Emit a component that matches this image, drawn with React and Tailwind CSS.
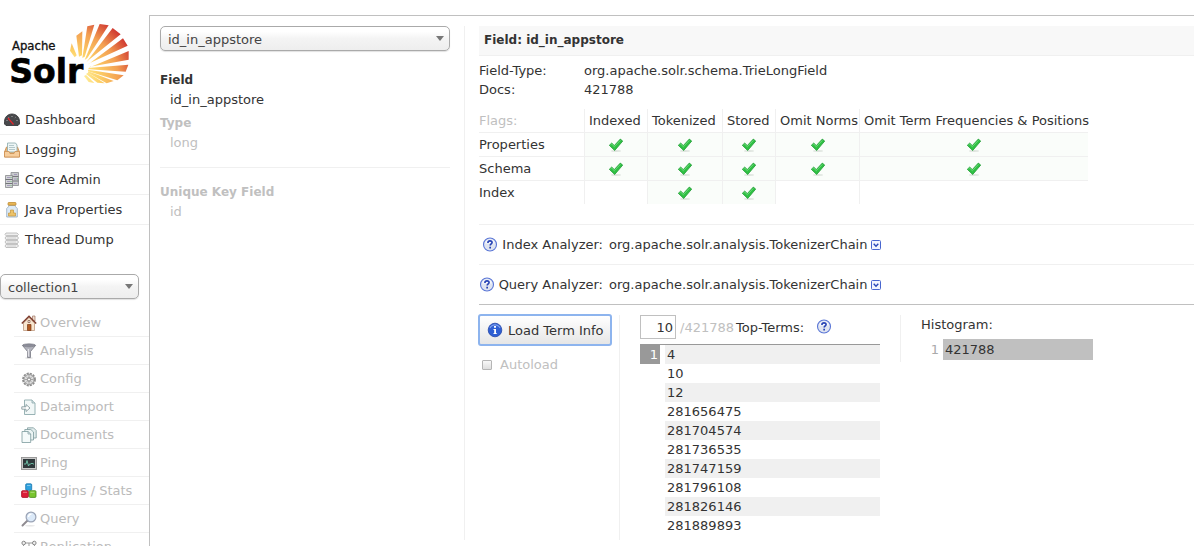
import React from "react";

const rays = [
  "210,152 215,130 230,166 224,172",
  "229,107 247,94 246,166 237,170",
  "262,79 283,74 254,170 247,174",
  "299,72 326,76 262,174 254,180",
  "338,84 362,103 266,180 259,187",
  "369,115 383,137 268,190 262,195",
  "386,153 386,179 270,200 266,203",
  "385,194 377,215 268,208 264,204",
  "371,226 352,241 264,214 264,209",
  "341,243 320,250 264,219 265,214",
  "314,250 292,248 258,222 264,218",
  "283,249 266,246 252,228 258,225",
];

function Logo() {
  return (
    <svg viewBox="0 0 447 315" className="h-[105px] w-[149px]" role="img" aria-label="Apache Solr">
      <defs>
        <radialGradient id="sun" gradientUnits="userSpaceOnUse" cx="205" cy="245" r="218">
          <stop offset="0.2" stopColor="#fff0a0" />
          <stop offset="0.42" stopColor="#fdd268" />
          <stop offset="0.7" stopColor="#f3a052" />
          <stop offset="1" stopColor="#cb2a2c" />
        </radialGradient>
      </defs>
      {rays.map((p) => (
        <polygon key={p} points={p} fill="url(#sun)" />
      ))}
      <text x="36" y="150" fontSize="35" stroke="#111" strokeWidth="1" fill="#111" className="font-['DejaVu_Sans',sans-serif]">Apache</text>
      <text x="28" y="248" fontSize="99" fontWeight="700" fill="#000" stroke="#000" strokeWidth="2" className="font-['DejaVu_Sans',sans-serif]">Solr</text>
    </svg>
  );
}

function Icon({ children }) {
  return (
    <svg viewBox="0 0 16 16" className="size-4 shrink-0" aria-hidden="true">
      {children}
    </svg>
  );
}

const icons = {
  dashboard: (
    <>
      <path d="M.5 12V9.500C.5 5 4 2 8 2s7.500 3 7.500 7.500V12l-1.500 1.500H2z" fill="#48494c" stroke="#2c2d30" strokeWidth=".8" />
      <path d="M2.500 8.500h1M4.500 5.300l.6.600M8 4v1M11.500 5.300l-.6.600M12.500 8.500h1" stroke="#bbb" strokeWidth=".9" />
      <path d="M4 6l5.500 6.500" stroke="#e5262c" strokeWidth="1.200" />
    </>
  ),
  logging: (
    <>
      <path d="M2.500 5L.5 10v5h15v-5l-2-5z" fill="#e7b276" stroke="#c98a4b" strokeWidth=".8" />
      <path d="M3.500 1h8l1.500 2v7h-9.500z" fill="#eef6f6" stroke="#8aa9ac" strokeWidth=".8" />
      <path d="M5 3.500h5M5 5.500h6M5 7.500h6" stroke="#a5bcc0" strokeWidth=".8" />
      <path d="M.5 9.500H5l1 2h4l1-2h4.500V15H.5z" fill="#f6cd9c" stroke="#cd9053" strokeWidth=".8" />
    </>
  ),
  core: (
    <>
      <path d="M7 .5h7.500v13H7z" fill="#c7c9cc" stroke="#8b8d90" strokeWidth=".8" />
      <path d="M7 4.500h7.500M7 9h7.500" stroke="#77797c" />
      <path d="M1.500 3.500h7v12h-7z" fill="#d2d4d6" stroke="#86888b" strokeWidth=".8" />
      <path d="M1.500 7.500h7M1.500 11.500h7" stroke="#727477" />
      <path d="M3 5.500h3M3 9.500h3M3 13.500h3M10 2.500h3M10 7h3M10 11.500h3" stroke="#9a8fb5" strokeWidth=".8" />
      <path d="M6.500 5.500h1M6.500 9.500h1M6.500 13.500h1M13 7h1" stroke="#65ad68" />
    </>
  ),
  java: (
    <>
      <path d="M4.500 3.500h7v1.200l1.800 1.800v8.500H2.700V6.500l1.800-1.800z" fill="#dceaf6" stroke="#91aac2" strokeWidth=".8" />
      <rect x="4" y=".5" width="8" height="2.700" rx=".8" fill="#e7b657" stroke="#b98427" strokeWidth=".7" />
      <path d="M6.500 8h3v3h2v3h-7v-3h2z" fill="#ecc36a" stroke="#c6953c" strokeWidth=".7" />
    </>
  ),
  thread: (
    <>
      <path d="M2 1h11l1.500 1.500L13 4l1.500 2L13 8l1.500 2L13 12l1.500 2-1.500 1.500H2L1 14l1.500-2L1 10l1.500-2L1 6l1.500-2L1 2.500z" fill="#eee" stroke="#b3b3b3" strokeWidth=".8" />
      <path d="M2.500 4H13M2.500 8H13M2.500 12H13" stroke="#999" />
      <path d="M3 6h9M3 10h9M3 14h9" stroke="#d2d2d2" />
    </>
  ),
  overview: (
    <>
      <path d="M11.500 1h2.500v5h-2.500z" fill="#efdccd" stroke="#9e7362" strokeWidth=".7" />
      <path d="M2.500 8L8 2.500 13.500 8v7.500h-11z" fill="#f8e6d0" stroke="#b58c70" strokeWidth=".7" />
      <path d="M.8 8.500L8 1.300l7.200 7.200" fill="none" stroke="#7d3c2c" strokeWidth="1.500" />
      <path d="M6.500 9.500h3.500v6H6.500z" fill="#b15a22" stroke="#7b3611" strokeWidth=".7" />
      <path d="M7 5.500h2v2H7z" fill="#fff" stroke="#8d6456" strokeWidth=".8" />
    </>
  ),
  analysis: (
    <>
      <ellipse cx="8" cy="15" rx="4" ry=".8" fill="#ddd" />
      <path d="M1.500 2.500l5 6V14.500h3V8.500l5-6z" fill="#b3b4bd" stroke="#777883" strokeWidth=".8" />
      <ellipse cx="8" cy="2.300" rx="6.500" ry="1.500" fill="#8b8c98" stroke="#777883" strokeWidth=".6" />
      <path d="M7.300 6v7.500" stroke="#f0f0f4" strokeWidth=".9" />
    </>
  ),
  config: (
    <>
      <circle cx="8" cy="8.500" r="6" fill="none" stroke="#8e8e8e" strokeWidth="1.800" strokeDasharray="2.200 .94" />
      <circle cx="8" cy="8.500" r="5" fill="#dedede" stroke="#8c8c8c" strokeWidth=".8" />
      <path d="M8 4v3M8 10v3M3.500 8.500h3M9.500 8.500h3M5 5.500l2 2M9 9.500l2 2M11 5.500l-2 2M7 9.500l-2 2" stroke="#999" strokeWidth=".8" />
      <circle cx="8" cy="8.500" r="1.600" fill="#fff" stroke="#777" strokeWidth=".9" />
    </>
  ),
  dataimport: (
    <>
      <path d="M3.500 1h7.500l3 3v11.500H3.500z" fill="#f1f7f7" stroke="#8daaad" strokeWidth=".9" />
      <path d="M11 1v3h3" fill="#d2e0e1" stroke="#8daaad" strokeWidth=".8" />
      <path d="M.8 7.800H5V5.500l4 3.500-4 3.500v-2.300H.8z" fill="#fff" stroke="#789194" strokeWidth=".8" />
    </>
  ),
  documents: (
    <>
      <path d="M6.500.8h6l2.700 2.700V11H6.500z" fill="#e2eded" stroke="#7c9a9d" strokeWidth=".8" />
      <path d="M3.800 2.500h6l2.700 2.500v8H3.800z" fill="#ebf4f4" stroke="#7c9a9d" strokeWidth=".8" />
      <path d="M1 4.500h6l2.700 2.500v8.500H1z" fill="#f5fafa" stroke="#7c9a9d" strokeWidth=".8" />
      <path d="M7 4.500V7h2.700" fill="none" stroke="#7c9a9d" strokeWidth=".7" />
    </>
  ),
  ping: (
    <>
      <rect x=".5" y="2.500" width="15" height="12" fill="#c9c9c9" stroke="#929292" strokeWidth=".9" />
      <rect x="2" y="4" width="12" height="9" fill="#2f383b" />
      <path d="M3 9h2l1-3.500L7.500 11l1-2H10l1-1 1 1h1" fill="none" stroke="#72c8ae" strokeWidth=".9" />
    </>
  ),
  plugins: (
    <>
      <rect x="4.700" y=".8" width="6" height="6.500" rx="1" fill="#2fa2df" stroke="#1876ad" strokeWidth=".8" />
      <rect x=".6" y="7.700" width="6.800" height="6.700" rx="1" fill="#dc1f38" stroke="#a30e23" strokeWidth=".8" />
      <rect x="8.200" y="7.700" width="6.800" height="6.700" rx="1" fill="#79c52e" stroke="#46881a" strokeWidth=".8" />
      <path d="M6 2.500h3.500M2 9.300h4M9.500 9.300h4" stroke="#fff" strokeOpacity=".4" />
    </>
  ),
  query: (
    <>
      <ellipse cx="9" cy="14.800" rx="5" ry=".7" fill="#e6e6e6" />
      <path d="M6.500 9.500l-5 5" stroke="#8f8b90" strokeWidth="2" strokeLinecap="round" />
      <circle cx="10" cy="6" r="4.900" fill="#dbe9f8" stroke="#9aa3b5" strokeWidth="1.200" />
      <path d="M7.500 6a3 3 0 013-2.800" fill="none" stroke="#fff" strokeWidth="1.300" />
    </>
  ),
  replication: (
    <>
      <path d="M4.500 4h7M8 4v8M2.500 6v7M13.500 6v7" fill="none" stroke="#999" />
      <circle cx="2.700" cy="4" r="1.800" fill="#eee" stroke="#888" />
      <circle cx="13.300" cy="4" r="1.800" fill="#eee" stroke="#888" />
      <circle cx="8" cy="13" r="1.800" fill="#eee" stroke="#888" />
    </>
  ),
};

const mainMenu = [
  ["Dashboard", "dashboard"],
  ["Logging", "logging"],
  ["Core Admin", "core"],
  ["Java Properties", "java"],
  ["Thread Dump", "thread"],
];

const coreMenu = [
  ["Overview", "overview"],
  ["Analysis", "analysis"],
  ["Config", "config"],
  ["Dataimport", "dataimport"],
  ["Documents", "documents"],
  ["Ping", "ping"],
  ["Plugins / Stats", "plugins"],
  ["Query", "query"],
  ["Replication", "replication"],
];

const flagNames = ["Indexed", "Tokenized", "Stored", "Omit Norms", "Omit Term Frequencies & Positions"];
const flagRows = [
  ["Properties", [1, 1, 1, 1, 1]],
  ["Schema", [1, 1, 1, 1, 1]],
  ["Index", [0, 1, 1, 0, 0]],
];

const terms = ["4", "10", "12", "281656475", "281704574", "281736535", "281747159", "281796108", "281826146", "281889893"];

function Picker({ label, value }) {
  return (
    <div className="grid items-center">
      <select
        aria-label={label}
        className="col-start-1 row-start-1 h-[25px] w-full appearance-none rounded-[5px] border border-[#aaa] bg-linear-to-b from-white from-20% via-[#f4f4f4] via-50% to-[#eee] pt-px pr-6 pl-[7px] text-[#444] shadow-[0_1px_1px_rgba(0,0,0,0.12)]"
      >
        <option>{value}</option>
      </select>
      <svg viewBox="0 0 8 5" className="pointer-events-none col-start-1 row-start-1 mr-1.5 h-[5px] w-2 justify-self-end" aria-hidden="true">
        <path d="M0 0h8L4 5z" fill="#777" />
      </svg>
    </div>
  );
}

function Check() {
  return (
    <svg viewBox="0 0 16 16" className="mx-auto size-4" role="img" aria-label="yes">
      <ellipse cx="8" cy="14" rx="5" ry=".9" fill="#dfe5df" />
      <path d="M1.300 8.300l2.400-2.200 2.600 2.500 6-6.500 2.400 2-8 9.400z" fill="#2fc143" stroke="#1e9a33" strokeWidth=".8" strokeLinejoin="round" />
      <path d="M2.500 8l1.200-1 2.600 2.600 6-6.200" fill="none" stroke="#7fe08a" strokeWidth=".8" />
    </svg>
  );
}

function Help() {
  return (
    <svg viewBox="0 0 16 16" className="size-4 shrink-0" role="img" aria-label="Help">
      <circle cx="8" cy="7.500" r="6.500" fill="#dfe4f0" stroke="#5a76d6" strokeWidth="1.100" />
      <path d="M3 6.500a5.100 5.100 0 0110 0z" fill="#f6f8fc" />
      <path d="M5.900 5.900C5.900 4.400 6.900 3.900 8 3.900s2.100.6 2.100 1.700c0 1.300-1.900 1.400-1.900 2.900" fill="none" stroke="#2743b4" strokeWidth="1.600" />
      <path d="M7.300 9.700H9v1.700H7.300z" fill="#2743b4" />
    </svg>
  );
}

function Expand() {
  return (
    <svg viewBox="0 0 10 10" className="size-2.5" aria-hidden="true">
      <rect x=".5" y=".5" width="9" height="9" rx="1" fill="#f2f5ff" stroke="#4866cf" />
      <path d="M2.700 3.800L5 6.200l2.300-2.400" fill="none" stroke="#2948b8" strokeWidth="1.400" />
    </svg>
  );
}

function Analyzer({ label }) {
  return (
    <div className="flex h-10 items-center border-t border-[#f0f0f0]">
      <div className="flex w-[124px] items-center justify-end gap-1 whitespace-nowrap">
        <Help />
        {label}
      </div>
      <button type="button" className="ml-1.5 flex items-center gap-1">
        org.apache.solr.analysis.TokenizerChain
        <Expand />
      </button>
    </div>
  );
}

export default function App() {
  return (
    <div className="flex h-screen overflow-hidden bg-white font-['DejaVu_Sans',sans-serif] text-[13px] leading-[19px] text-[#333]">
      <aside className="w-[149px] shrink-0">
        <Logo />
        <nav aria-label="Main">
          <ul>
            {mainMenu.map(([name, icon]) => (
              <li key={name} className="h-[30px] border-b border-[#f0f0f0] last:border-transparent">
                <a href="#" className="flex h-full items-center gap-[5px] pl-1 whitespace-nowrap">
                  <Icon>{icons[icon]}</Icon>
                  {name}
                </a>
              </li>
            ))}
          </ul>
        </nav>
        <div className="mt-[19px] pr-2.5">
          <Picker label="Core" value="collection1" />
        </div>
        <nav aria-label="Core" className="mt-2.5 pl-3.5">
          <ul>
            {coreMenu.map(([name, icon]) => (
              <li key={name} className="h-7 border-b border-[#f0f0f0]">
                <a href="#" className="flex h-full items-center gap-[3px] pl-[7px] whitespace-nowrap text-[#bbb]">
                  <Icon>{icons[icon]}</Icon>
                  {name}
                </a>
              </li>
            ))}
          </ul>
        </nav>
      </aside>

      <main className="mt-[15px] flex min-w-0 flex-1 items-start self-stretch border-t border-l border-[#c0c0c0] pt-2.5 pl-2.5">
        <section className="w-[290px] shrink-0" aria-label="Field selection">
          <Picker label="Field" value="id_in_appstore" />
          <dl className="mt-5 border-b border-[#f0f0f0] pb-[15px]">
            <dt className="text-[12px] leading-[19px] font-bold">Field</dt>
            <dd className="pl-2.5">id_in_appstore</dd>
            <dt className="mt-[5px] text-[12px] leading-[19px] font-bold text-[#c0c0c0]">Type</dt>
            <dd className="pl-2.5 text-[#c0c0c0]">long</dd>
          </dl>
          <dl className="mt-[15px] text-[#c0c0c0]">
            <dt className="text-[12px] leading-[19px] font-bold">Unique Key Field</dt>
            <dd className="pl-2.5">id</dd>
          </dl>
        </section>

        <section className="ml-3.5 min-w-0 flex-1 border-l border-[#f0f0f0] pl-3.5" aria-label="Field details">
          <h2 className="border-b border-[#f0f0f0] bg-[#f8f8f8] p-[5px] text-[12px] leading-[19px] font-bold">Field: id_in_appstore</h2>
          <dl className="mt-[5px] grid grid-cols-[105px_1fr]">
            <dt>Field-Type:</dt>
            <dd>org.apache.solr.schema.TrieLongField</dd>
            <dt>Docs:</dt>
            <dd>421788</dd>
          </dl>
          <table className="mt-2.5 w-[609px] table-fixed border-separate border-spacing-0">
            <colgroup>
              <col className="w-[105px]" />
              <col className="w-[63px]" />
              <col className="w-[75px]" />
              <col className="w-[53px]" />
              <col className="w-[84px]" />
              <col className="w-[229px]" />
            </colgroup>
            <thead>
              <tr className="h-[23px] whitespace-nowrap">
                <th className="p-0 text-left font-normal text-[#c0c0c0]">Flags:</th>
                {flagNames.map((f) => (
                  <th key={f} className="border-l border-[#f0f0f0] p-0 pl-1 text-left font-normal">{f}</th>
                ))}
              </tr>
            </thead>
            <tbody>
              {flagRows.map(([name, flags]) => (
                <tr key={name} className="h-6">
                  <th className="border-t border-[#f0f0f0] p-0 text-left font-normal">{name}</th>
                  {flags.map((on, i) => (
                    <td key={i} className={on ? "border-t border-l border-[#f0f0f0] bg-[#fafdfa] p-0" : "border-t border-l border-[#f0f0f0] p-0"}>
                      {on ? <Check /> : null}
                    </td>
                  ))}
                </tr>
              ))}
            </tbody>
          </table>

          <div className="mt-5">
            <Analyzer label="Index Analyzer:" />
            <Analyzer label="Query Analyzer:" />
          </div>

          <div className="flex items-stretch border-t border-[#c0c0c0] pt-2.5">
            <div className="w-[140px] shrink-0">
              <button
                type="button"
                className="-mt-px -ml-px flex h-8 w-[134px] items-center gap-[5px] rounded-[3px] border-2 border-[#8db4ee] bg-linear-to-b from-white to-[#e6e6e6] pl-[7px] whitespace-nowrap"
              >
                <svg viewBox="0 0 16 16" className="size-4" aria-hidden="true">
                  <circle cx="8" cy="8" r="6.800" fill="#2f5fd3" stroke="#2446a8" strokeWidth=".8" />
                  <path d="M3 6a5.500 5.500 0 0110 0" fill="none" stroke="#7fa0ec" strokeWidth="1.200" />
                  <path d="M7 4h2v1.800H7zM6.500 7H9v4h.7v1H6.500v-1h.7V8h-.7z" fill="#fff" />
                </svg>
                Load Term Info
              </button>
              <label className="mt-[9px] flex items-center gap-2 pl-[3px] text-[#c0c0c0]">
                <input type="checkbox" className="size-2.5 appearance-none rounded-[1px] border border-[#b5b5b5] bg-linear-to-b from-[#f8f8f8] to-[#dedede]" />
                Autoload
              </label>
            </div>

            <div className="w-[281px] shrink-0 border-l border-[#f0f0f0] pr-5 pb-[5px] pl-5">
              <div className="flex items-center whitespace-nowrap">
                <input aria-label="Number of top terms" defaultValue="10" className="h-6 w-9 border border-[#c0c0c0] pr-[2px] text-right" />
                <span className="ml-1 text-[#c0c0c0]">/421788</span>
                <span className="mr-3 ml-[2px]">Top-Terms:</span>
                <Help />
              </div>
              <div className="mt-[5px] flex gap-[5px] border-t border-[#999]">
                <span className="h-[19px] w-5 bg-[#999] pr-[2px] text-right text-white">1</span>
                <ul className="flex-1">
                  {terms.map((t) => (
                    <li key={t} className="pl-[2px] odd:bg-[#f0f0f0]">{t}</li>
                  ))}
                </ul>
              </div>
            </div>

            <div className="shrink-0 self-start border-l border-[#f0f0f0] pl-5">
              <p>Histogram:</p>
              <div className="mt-[5px] flex items-center gap-1 pb-[2px]">
                <span className="w-[18px] text-right text-[#aaa]">1</span>
                <span className="w-[150px] bg-[#c0c0c0] py-px pl-[2px]">421788</span>
              </div>
            </div>
          </div>
        </section>
      </main>
    </div>
  );
}
